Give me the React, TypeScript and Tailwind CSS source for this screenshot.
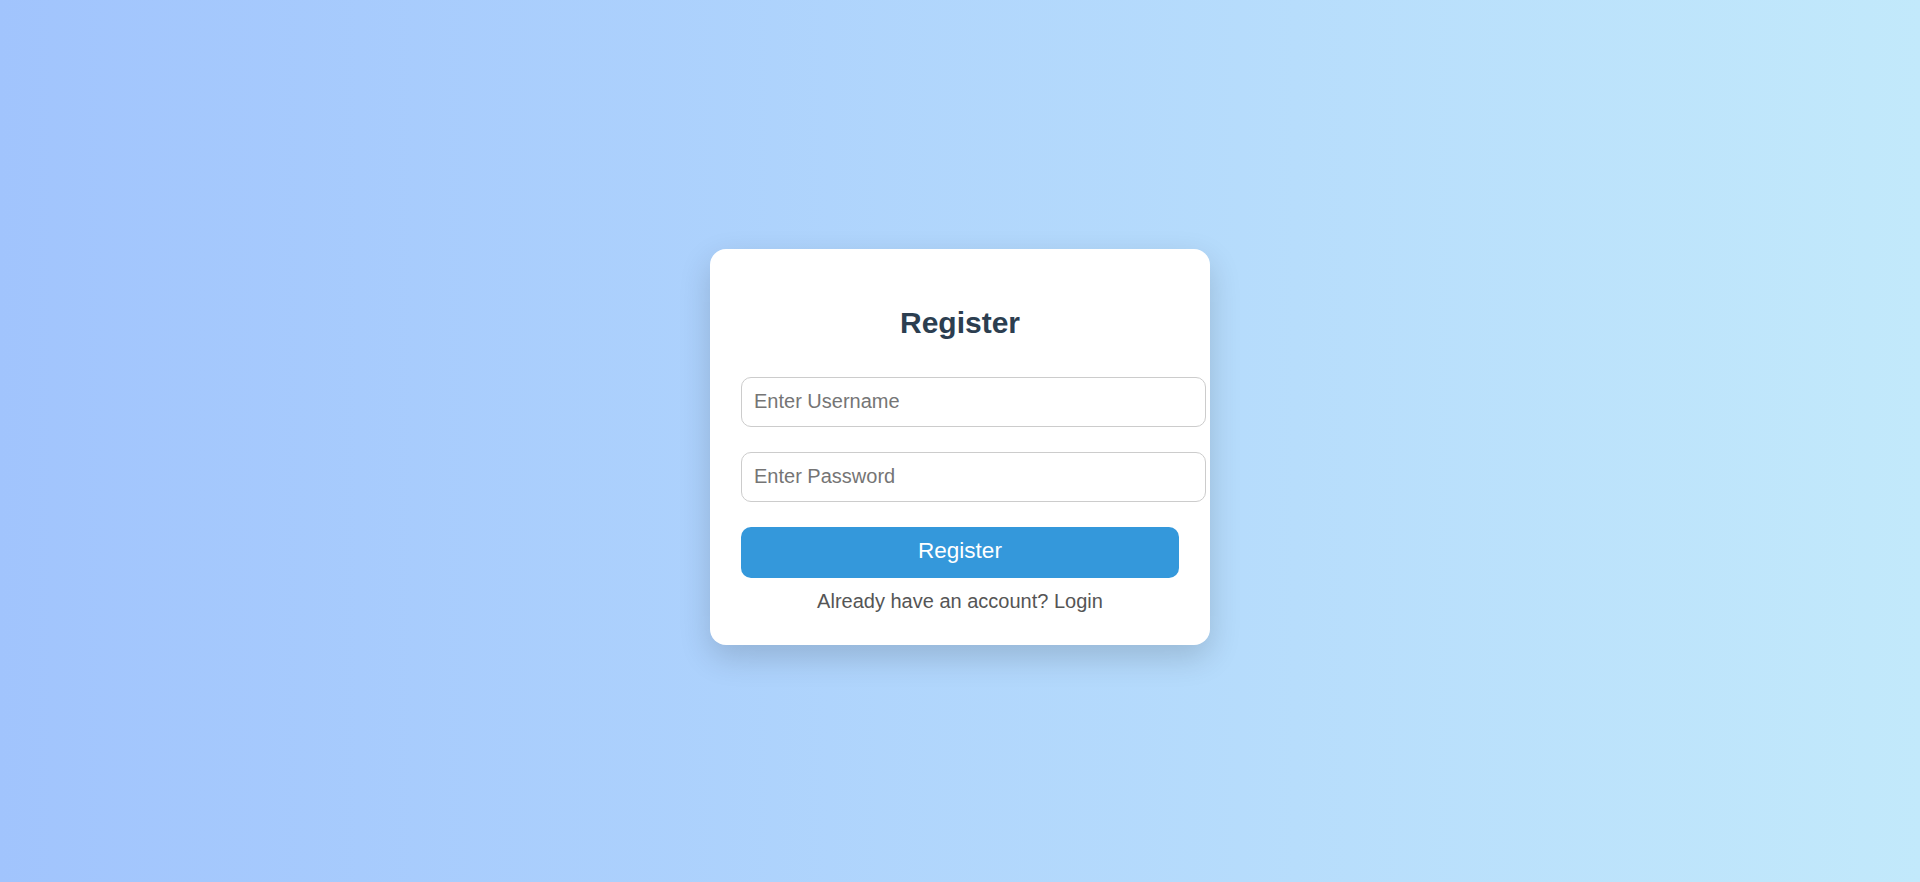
import { useState } from "react";

const App = () => {
    const [username, setUsername] = useState("");
    const [password, setPassword] = useState("");

    return (
        <div className="min-h-screen w-full bg-linear-to-r from-[#a1c4fd] to-[#c2e9fb] flex justify-center font-['Liberation_Sans',Arial,sans-serif]">
            {/* Card */}
            <div className="mt-[249px] mb-auto w-[500px] h-[396px] bg-white rounded-[16px] shadow-[0_12px_32px_rgba(0,0,0,0.16)] px-[31px] pt-[31px] pb-[31px] flex flex-col">
                <h2 className="mt-[26px] mb-[37px] text-center text-[30px] leading-[34px] font-bold text-[#2c3e50]">
                    Register
                </h2>

                <input
                    type="text"
                    value={username}
                    onChange={(e) => setUsername(e.target.value)}
                    placeholder="Enter Username"
                    className="w-[465px] h-[50px] shrink-0 px-[12px] pb-[2px] border border-[#cccccc] rounded-[10px] text-[20px] text-[#333] placeholder:text-[#757575] outline-none"
                />

                <input
                    type="password"
                    value={password}
                    onChange={(e) => setPassword(e.target.value)}
                    placeholder="Enter Password"
                    className="mt-[25px] w-[465px] h-[50px] shrink-0 px-[12px] pb-[2px] border border-[#cccccc] rounded-[10px] text-[20px] text-[#333] placeholder:text-[#757575] outline-none"
                />

                <button className="mt-[25px] w-[438px] h-[51px] shrink-0 bg-[#3498db] rounded-[10px] text-white text-[22.5px] leading-none pb-[2px]">
                    Register
                </button>

                <p className="mt-[12px] text-center text-[20px] leading-[23px] text-[#555555]">
                    Already have an account? Login
                </p>
            </div>
        </div>
    );
};

export default App;
